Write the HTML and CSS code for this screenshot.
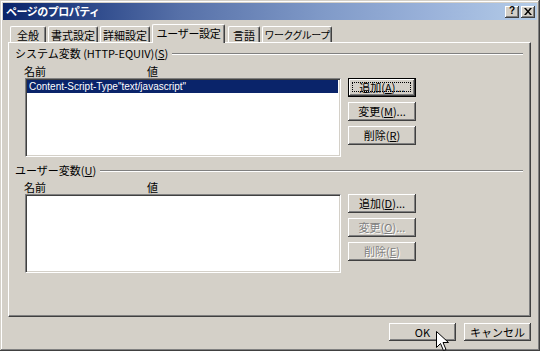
FILE: index.html
```html
<!DOCTYPE html>
<html lang="ja">
<head>
<meta charset="utf-8">
<title>ページのプロパティ</title>
<link rel="stylesheet" href="styles.css">
</head>
<body>
<div class="dialog">
  <div class="titlebar">
    <span class="title">ページのプロパティ</span>
    <div class="tb-buttons">
      <span class="tb-btn help">?</span>
      <span class="tb-btn close"><svg width="8" height="7" viewBox="0 0 8 7"><path d="M0 0h2l2 2.5L6 0h2L5 3.5 8 7H6L4 4.5 2 7H0l3-3.5z" fill="#000"/></svg></span>
    </div>
  </div>
  <div class="tabs">
    <div class="tab t1">全般</div>
    <div class="tab t2">書式設定</div>
    <div class="tab t3">詳細設定</div>
    <div class="tab sel">ユーザー設定</div>
    <div class="tab t5">言語</div>
    <div class="tab t6">ワークグループ</div>
  </div>
  <div class="panel">
    <div class="group-head"><span class="glabel">システム変数 (HTTP-EQUIV)(<u>S</u>)</span><span class="etch"></span></div>
    <div class="cols"><span class="col-name">名前</span><span class="col-val">値</span></div>
    <div class="group-body">
      <div class="listbox">
        <div class="item selected">Content-Script-Type"text/javascript"</div>
      </div>
      <div class="btns">
        <div class="btn default">追加(<u>A</u>)...</div>
        <div class="btn">変更(<u>M</u>)...</div>
        <div class="btn">削除(<u>R</u>)</div>
      </div>
    </div>
    <div class="group-head second"><span class="glabel">ユーザー変数(<u>U</u>)</span><span class="etch"></span></div>
    <div class="cols second"><span class="col-name">名前</span><span class="col-val">値</span></div>
    <div class="group-body">
      <div class="listbox"></div>
      <div class="btns">
        <div class="btn">追加(<u>D</u>)...</div>
        <div class="btn disabled">変更(<u>O</u>)...</div>
        <div class="btn disabled">削除(<u>E</u>)</div>
      </div>
    </div>
  </div>
  <div class="footer">
    <div class="btn wide">OK</div>
    <div class="btn wide">キャンセル</div>
  </div>
  <svg class="cursor" width="13" height="20" viewBox="0 0 13 20"><path d="M0.5 0.5V16.5L4.5 12.5L7.5 19.5L10 18.5L7 11.5H12.5Z" fill="#fff" stroke="#000" stroke-width="1"/></svg>
</div>
</body>
</html>
```

FILE: styles.css
```css
* { box-sizing: border-box; }
html, body { margin: 0; padding: 0; }
body {
  width: 540px;
  height: 351px;
  overflow: hidden;
  background: #d4d0c8;
  font: 11px "Liberation Sans", "Noto Sans CJK JP", sans-serif;
  color: #000;
}
.dialog {
  position: relative;
  width: 540px;
  height: 351px;
  padding: 3px;
  background: #d4d0c8;
  box-shadow: inset -1px -1px #404040, inset 1px 1px #d4d0c8, inset -2px -2px #808080, inset 2px 2px #fff;
  display: flex;
  flex-direction: column;
}
.titlebar {
  height: 17px;
  display: flex;
  align-items: center;
  justify-content: space-between;
  padding: 0 2px 0 3px;
  background: linear-gradient(to right, #0a246a 0%, #2a4688 15%, #5670a8 33%, #809ac8 60%, #9ab2da 80%, #b4cce8 100%);
}
.title {
  color: #fff;
  font-weight: bold;
  font-size: 11px;
  font-family: "Noto Sans CJK JP", sans-serif;
  line-height: 13px;
  letter-spacing: -0.5px;
}
.tb-buttons { display: flex; gap: 2px; }
.tb-btn {
  width: 14px;
  height: 12px;
  background: #d4d0c8;
  box-shadow: inset -1px -1px #404040, inset 1px 1px #fff, inset -2px -2px #808080;
  display: flex;
  align-items: center;
  justify-content: center;
  font: bold 10px "Liberation Sans", sans-serif;
  line-height: 10px;
  padding-bottom: 1px;
}
.tabs {
  display: flex;
  align-items: flex-end;
  height: 23px;
  margin-bottom: -1px;
  padding-left: 7px;
  position: relative;
  z-index: 1;
}
.tab {
  height: 16px;
  margin-bottom: 1px;
  display: flex;
  align-items: center;
  justify-content: center;
  font-family: "Noto Sans CJK JP", sans-serif;
  font-size: 11px;
  line-height: 12px;
  white-space: nowrap;
  background: #d4d0c8;
  border-top: 1px solid #fff;
  border-left: 1px solid #fff;
  border-right: 1px solid #404040;
  box-shadow: inset -1px 0 #808080;
  border-top-left-radius: 2px;
  border-top-right-radius: 2px;
}
.t1 { width: 36px; }
.t2 { width: 50px; margin-left: 2px; }
.t3 { width: 50px; margin-left: 2px; }
.tab.sel {
  width: 73px;
  height: 19px;
  margin-left: 2px;
  margin-bottom: 0;
  padding-bottom: 3px;
  letter-spacing: -0.3px;
}
.t5 { width: 32px; margin-left: 3px; }
.t6 { width: 70px; margin-left: 2px; font-size: 10px; letter-spacing: -0.6px; }
.panel {
  margin-left: 5px;
  width: 523px;
  height: 275px;
  border-top: 1px solid #fff;
  border-left: 1px solid #fff;
  border-right: 1px solid #404040;
  border-bottom: 1px solid #404040;
  box-shadow: inset -1px -1px #808080;
  padding: 4px 7px 0 6px;
  display: flex;
  flex-direction: column;
}
.group-head {
  display: flex;
  align-items: center;
  height: 13px;
}
.group-head.second { margin-top: 7px; }
.glabel {
  font-family: "Noto Sans CJK JP", "Liberation Sans", sans-serif;
  font-size: 11px;
  line-height: 13px;
  white-space: nowrap;
}
.etch {
  flex: 1;
  height: 2px;
  margin-left: 4px;
  border-top: 1px solid #808080;
  border-bottom: 1px solid #fff;
}
.cols {
  display: flex;
  height: 13px;
  margin-top: 5px;
  font-family: "Noto Sans CJK JP", sans-serif;
  font-size: 11px;
  line-height: 13px;
}
.cols.second { margin-top: 4px; }
.col-name { width: 132px; padding-left: 9px; }
.group-body { display: flex; align-items: flex-start; }
.listbox {
  margin-left: 10px;
  width: 316px;
  height: 79px;
  background: #fff;
  border-top: 1px solid #808080;
  border-left: 1px solid #808080;
  border-right: 1px solid #fff;
  border-bottom: 1px solid #fff;
  box-shadow: inset 1px 1px #404040, inset -1px -1px #d4d0c8;
  padding: 1px 2px 1px 1px;
}
.item {
  height: 13px;
  line-height: 13px;
  padding-left: 2px;
  font-size: 10px;
  font-family: "Liberation Sans", sans-serif;
  white-space: nowrap;
}
.item.selected { background: #0a246a; color: #fff; }
.btns {
  display: flex;
  flex-direction: column;
  gap: 5px;
  margin-left: 7px;
}
.btn {
  position: relative;
  width: 68px;
  height: 19px;
  display: flex;
  align-items: center;
  justify-content: center;
  background: #d4d0c8;
  box-shadow: inset -1px -1px #404040, inset 1px 1px #fff, inset -2px -2px #808080;
  font-family: "Noto Sans CJK JP", "Liberation Sans", sans-serif;
  font-size: 11px;
  line-height: 12px;
  white-space: nowrap;
  padding-bottom: 1px;
}
.btn u { text-underline-offset: 1px; }
.btn.default {
  border: 1px solid #000;
}
.btn.default::after {
  content: "";
  position: absolute;
  left: 3px;
  top: 3px;
  right: 4px;
  bottom: 4px;
  border: 1px dotted #000;
}
.btn.disabled {
  color: #808080;
  text-shadow: 1px 1px #fff;
}
.footer {
  display: flex;
  justify-content: flex-end;
  gap: 8px;
  margin-top: 6px;
  padding-right: 6px;
}
.btn.wide { width: 67px; height: 18px; }
.cursor {
  position: absolute;
  left: 436px;
  top: 331px;
}
```
